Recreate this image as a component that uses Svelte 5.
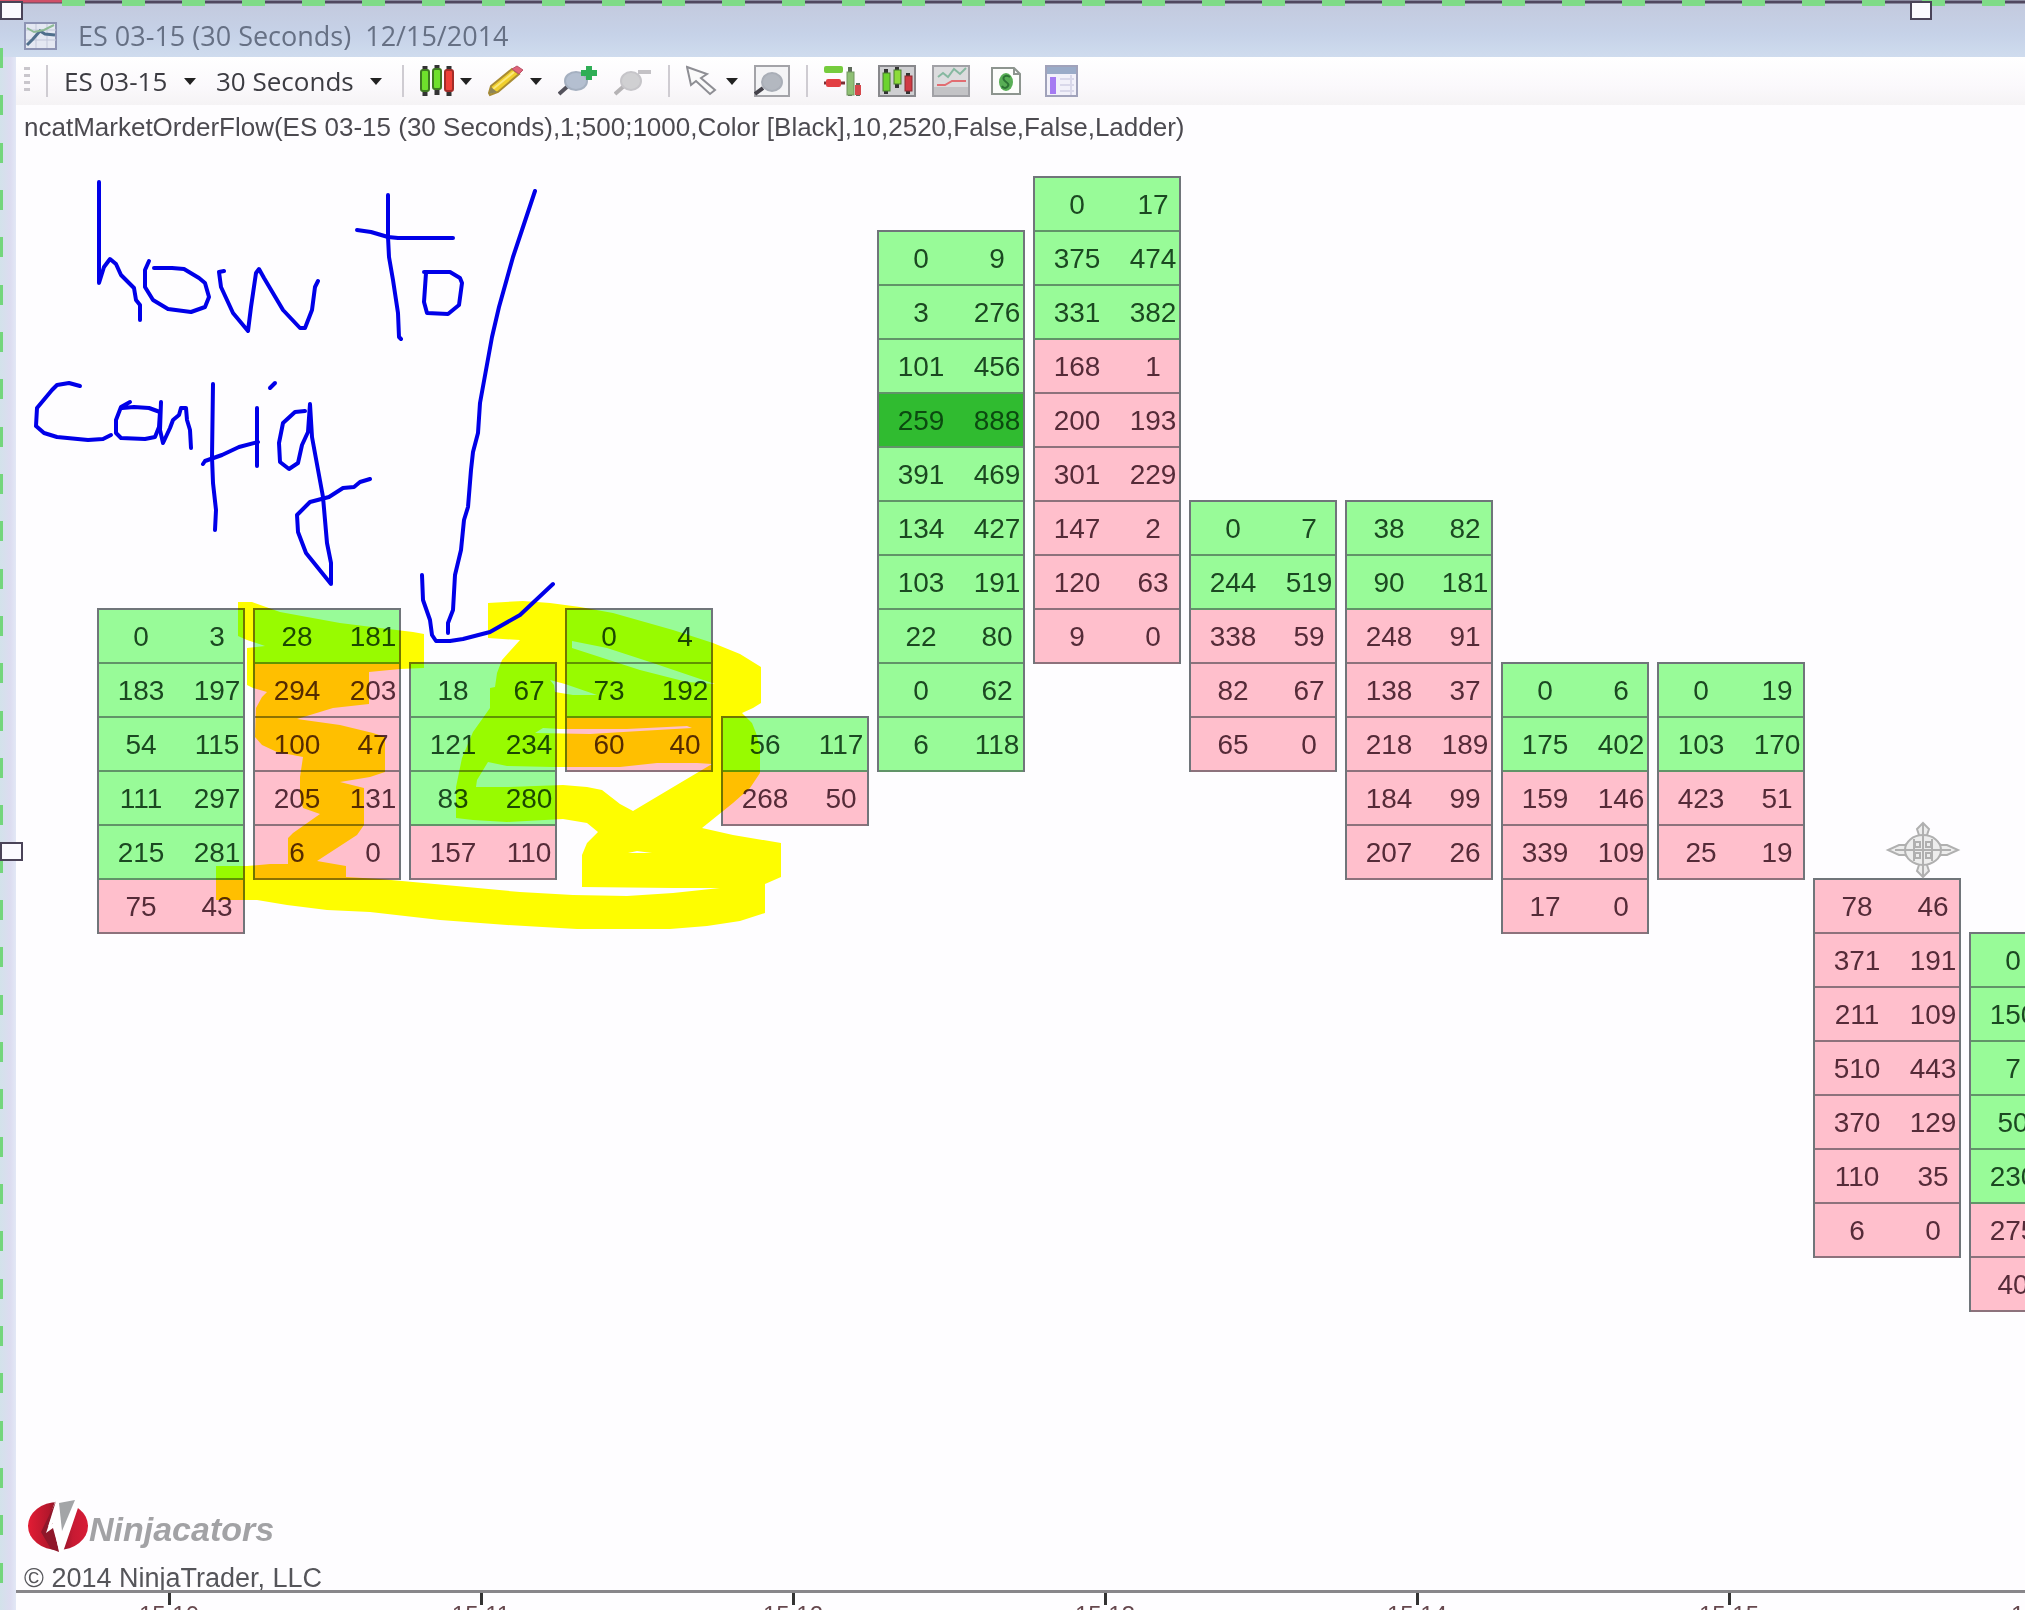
<script lang="ts">
  type Bar = { start: number; up: number; rows: [string, string][]; strong?: number };

  // every bar: "bid ask" per price level, start = level of its top row
  function bar(start: number, up: number, text: string, strong = -1): Bar {
    const rows = text.split(",").map((r) => r.split(" ") as [string, string]);
    return { start, up, rows, strong };
  }

  const bars: Bar[] = [
    bar(8, 5, "0 3,183 197,54 115,111 297,215 281,75 43"),
    bar(8, 1, "28 181,294 203,100 47,205 131,6 0"),
    bar(9, 3, "18 67,121 234,83 280,157 110"),
    bar(8, 2, "0 4,73 192,60 40"),
    bar(10, 1, "56 117,268 50"),
    bar(1, 10, "0 9,3 276,101 456,259 888,391 469,134 427,103 191,22 80,0 62,6 118", 3),
    bar(0, 3, "0 17,375 474,331 382,168 1,200 193,301 229,147 2,120 63,9 0"),
    bar(6, 2, "0 7,244 519,338 59,82 67,65 0"),
    bar(6, 2, "38 82,90 181,248 91,138 37,218 189,184 99,207 26"),
    bar(9, 2, "0 6,175 402,159 146,339 109,17 0"),
    bar(9, 2, "0 19,103 170,423 51,25 19"),
    bar(13, 0, "78 46,371 191,211 109,510 443,370 129,110 35,6 0"),
    bar(14, 5, "0 ,150 ,7 ,50 ,230 ,275 ,40 "),
  ];

  const times = ["15:10", "15:11", "15:12", "15:13", "15:14", "15:15", "15:16"];

  const ink = [
    "99,182 99,283 104,267 110,259 116,264 121,275 134,288 136,300 140,305 140,320",
    "149,261 145,270 145,287 153,300 168,309 191,312 205,307 209,297 205,283 199,278 184,269 172,268 154,268",
    "224,271 219,272 221,287 233,313 248,331 251,307 256,273 259,269 264,278 283,310 300,328 305,328 312,310 315,287 318,281",
    "388,195 388,237 389,257 393,280 398,313 399,337 401,339",
    "357,230 371,232 388,237 398,238 453,238",
    "426,273 424,302 427,313 448,314 459,305 462,283 460,278 450,272 424,272",
    "80,386 69,383 57,385 52,390 37,408 36,426 44,433 57,437 88,440 103,439 111,435",
    "130,402 121,407 116,420 116,433 121,438 145,439 155,437 159,427 160,412 149,408 134,407 122,408",
    "161,402 160,430 163,443 170,428 173,420 179,415 181,408 186,408 187,420 190,430 191,448",
    "213,384 212,457 213,483 216,510 215,530",
    "203,464 205,461 222,455 239,447 258,442",
    "257,408 257,466",
    "275,383 270,388",
    "305,411 295,412 283,423 279,443 280,462 289,469 298,463 302,445 308,432 310,404 312,437 323,497 327,543 331,563 331,584 306,553 298,532 297,515 310,502 329,497 343,488 354,487 360,482 370,479",
    "535,191 522,230 513,257 499,307 492,337 480,403 478,433 473,452 471,470 468,507 464,520 461,550 455,575 453,610 448,623 448,633",
    "422,575 423,600 430,620 432,635 436,641 450,641 463,639 490,632 520,615 553,584",
  ];

  const marker =
    "M238 602L252 602L280 612L340 623L380 628L413 632L424 634V668L400 669L369 672V704L333 708L297 719L340 725L373 733L385 737V772L370 777L340 782L364 788V825L357 835L317 861L346 866V877L380 879L413 882L520 892L573 895L627 896L673 893L720 888H673L582 887V855L587 843L598 832L587 823L563 819L507 822L473 820L456 818V787L462 758L473 732L490 708V688L495 687L497 673L502 660L520 640L488 638V603L523 601L550 603L580 607L613 613L673 630L713 643L740 654L761 667V703L753 708L742 713L752 723L756 733L760 747V773L750 788L733 803L702 828L733 835L781 843V877L765 884V913L740 921L707 926L670 929H577L507 925L440 920L370 912L327 910L287 905L257 900H216V866H247L270 864H288V838L293 833L320 814L303 808L300 797V777L303 757L277 752L262 745L255 737L256 708L262 697L267 692L253 688L247 685V648L265 646L247 640L238 636Z" +
    "M572 641L607 648L653 663L715 684L687 682L640 670L572 648Z" +
    "M550 680L565 684L597 695H573L555 692L554 685Z" +
    "M535 733L543 728L560 729H627L687 726L692 728L640 731L590 734Z" +
    "M488 762L507 766L553 767H620L657 763H697L712 764L680 783L633 811L620 804L602 790L587 787L563 785L507 787H476L477 780Z" +
    "M628 853L637 851L652 853Z";
</script>

{#snippet caret()}
  <svg class="caret" width="12" height="8" viewBox="0 0 12 8"><path d="M0 1H12L6 8Z" fill="#222" /></svg>
{/snippet}

<div class="window">
  <header class="titlebar">
    <svg width="34" height="28" viewBox="0 0 34 28">
      <rect x="1" y="1" width="31" height="26" fill="#e4e8f2" stroke="#8d94b4" stroke-width="2" />
      <path d="M2 8H32M2 18H32M12 2V26M23 2V26" stroke="#c3c8da" />
      <path d="M3 23L9 17L16 9L21 12L31 13" fill="none" stroke="#4f6f8c" stroke-width="3" />
      <path d="M3 6L10 10L20 8L30 3" fill="none" stroke="#8dbb95" stroke-width="2" />
    </svg>
    <h1>ES 03-15 (30 Seconds)&nbsp; 12/15/2014</h1>
  </header>

  <main>
    <div class="toolbar">
      <span class="grip"></span>
      <span class="sep"></span>
      <label class="pick">
        <select aria-label="Instrument"><option>ES 03-15</option></select>
        {@render caret()}
      </label>
      <label class="pick">
        <select aria-label="Interval"><option>30 Seconds</option></select>
        {@render caret()}
      </label>
      <span class="sep"></span>
      <button aria-label="Chart style">
        <svg width="34" height="32" viewBox="0 0 34 32">
          <path d="M5 1V31M17 0V30M29 1V31" stroke="#333" stroke-width="5" />
          <rect x="1" y="5" width="8" height="21" rx="2" fill="#6fe02c" stroke="#3f7a22" stroke-width="2" />
          <rect x="13" y="4" width="8" height="20" rx="2" fill="#6fe02c" stroke="#3f7a22" stroke-width="2" />
          <rect x="25" y="5" width="8" height="21" rx="2" fill="#ee4038" stroke="#a32c28" stroke-width="2" />
        </svg>
        {@render caret()}
      </button>
      <button aria-label="Drawing tools">
        <svg width="36" height="32" viewBox="0 0 36 32">
          <path d="M1 28L3 21L24 4L31 9L10 27L2 30Z" fill="#f0cf2e" stroke="#a98c33" stroke-width="2" />
          <path d="M5 24L26 7" stroke="#fbe97c" stroke-width="2" />
          <path d="M24 4L29 1L35 5L31 9Z" fill="#e0637a" stroke="#b95468" />
          <path d="M1 29L3 22L9 27Z" fill="#8d8458" />
        </svg>
        {@render caret()}
      </button>
      <button aria-label="Zoom in">
        <svg width="40" height="32" viewBox="0 0 40 32">
          <path d="M1 29L10 21" stroke="#54525c" stroke-width="4" />
          <ellipse cx="18" cy="16" rx="11" ry="9" fill="#b4bfd0" stroke="#a5b0c0" stroke-width="2" />
          <path d="M31 1V15M23 8H39" stroke="#2fae56" stroke-width="6" />
        </svg>
      </button>
      <button aria-label="Zoom out">
        <svg width="38" height="32" viewBox="0 0 38 32">
          <path d="M1 29L10 21" stroke="#b5b3b5" stroke-width="4" />
          <ellipse cx="17" cy="16" rx="10" ry="9" fill="#d0d0d2" stroke="#c6c5c9" stroke-width="2" />
          <path d="M24 7H37" stroke="#c4c2c6" stroke-width="4" />
        </svg>
      </button>
      <span class="sep"></span>
      <button aria-label="Cursor">
        <svg width="34" height="32" viewBox="0 0 34 32">
          <path d="M1 2L5 20L10 16L24 29L29 25L15 13L21 9Z" fill="#fafafa" stroke="#8e8e94" stroke-width="2" />
        </svg>
        {@render caret()}
      </button>
      <button aria-label="Zoom to frame">
        <svg width="36" height="32" viewBox="0 0 36 32">
          <rect x="1" y="1" width="34" height="30" fill="#f4f4f6" stroke="#a3a3a8" stroke-width="2" />
          <path d="M1 29L9 23" stroke="#44424a" stroke-width="4" />
          <ellipse cx="18" cy="17" rx="10" ry="9" fill="#b3b8c0" stroke="#a9aeb7" stroke-width="2" />
        </svg>
      </button>
      <span class="sep"></span>
      <button aria-label="Order entry">
        <svg width="38" height="32" viewBox="0 0 38 32">
          <rect x="0" y="1" width="19" height="7" rx="2" fill="#76cc3e" />
          <path d="M0 18H21" stroke="#7c2f34" stroke-width="3" />
          <rect x="2" y="14" width="15" height="8" rx="2" fill="#e23f43" />
          <path d="M26 2V31M34 18V31" stroke="#5d6a5a" stroke-width="4" />
          <rect x="23" y="7" width="7" height="23" fill="#8fc075" stroke="#71975f" />
          <rect x="31" y="20" width="6" height="10" fill="#d5484c" />
        </svg>
      </button>
      <button aria-label="Bars panel">
        <svg width="38" height="32" viewBox="0 0 38 32">
          <rect x="1" y="1" width="36" height="30" fill="#cfcfd2" stroke="#88888c" stroke-width="2" />
          <path d="M8 4V29M19 2V23M30 8V29" stroke="#333" stroke-width="4" />
          <rect x="5" y="8" width="7" height="18" fill="#6cd32e" stroke="#497c30" />
          <rect x="16" y="5" width="7" height="14" fill="#8ddb3a" stroke="#497c30" />
          <rect x="27" y="11" width="7" height="15" fill="#cf3a44" stroke="#8e2b33" />
        </svg>
      </button>
      <button aria-label="Indicators">
        <svg width="38" height="32" viewBox="0 0 38 32">
          <rect x="1" y="1" width="36" height="30" fill="#dcdcde" stroke="#a1a1a6" stroke-width="2" />
          <rect x="2" y="22" width="34" height="8" fill="#c3c3c6" />
          <path d="M6 12L11 8L16 12L22 4L28 9L34 3" fill="none" stroke="#86b8a0" stroke-width="2" />
          <path d="M5 20L13 20L20 16L34 16" fill="none" stroke="#e26d72" stroke-width="2" />
        </svg>
      </button>
      <button aria-label="Account">
        <svg width="38" height="32" viewBox="0 0 38 32">
          <path d="M6 3H28L34 9V29H6Z" fill="#fcfdfb" stroke="#8d958f" stroke-width="2" />
          <path d="M28 3V9H34" fill="none" stroke="#8d958f" stroke-width="2" />
          <ellipse cx="20" cy="17" rx="7" ry="9" fill="#58ae55" />
          <path d="M24 12C20 9 16 12 18 15S24 18 22 21S17 23 16 21" fill="none" stroke="#2c7434" stroke-width="2" />
        </svg>
      </button>
      <button aria-label="Properties">
        <svg width="38" height="32" viewBox="0 0 38 32">
          <rect x="6" y="1" width="31" height="30" fill="#f2f1fa" stroke="#a0a2ba" stroke-width="2" />
          <rect x="7" y="2" width="29" height="7" fill="#9aabc8" />
          <rect x="10" y="12" width="6" height="17" fill="#a57bf2" />
          <path d="M20 14H34M20 20H34M20 26H34M31 10V30" stroke="#d9d8ea" stroke-width="2" />
        </svg>
      </button>
    </div>

    <section class="chart">
      <p class="indicator">ncatMarketOrderFlow(ES 03-15 (30 Seconds),1;500;1000,Color [Black],10,2520,False,False,Ladder)</p>

      <div class="bars">
        {#each bars as b, i}
          <table aria-label="Bar {i + 1}" style:--start={b.start}>
            <tbody>
              {#each b.rows as [bid, ask], r}
                <tr class:up={r < b.up} class:strong={r === b.strong}>
                  <td>{bid}</td>
                  <td>{ask}</td>
                </tr>
              {/each}
            </tbody>
          </table>
        {/each}
      </div>

      <div class="brand">
        <svg width="62" height="54" viewBox="0 0 62 54">
          <defs>
            <linearGradient id="disc">
              <stop offset="0" stop-color="#e31c34" />
              <stop offset="0.35" stop-color="#b3172c" />
              <stop offset="0.5" stop-color="#7d1424" />
              <stop offset="0.75" stop-color="#c71a33" />
              <stop offset="1" stop-color="#d81c36" />
            </linearGradient>
          </defs>
          <ellipse cx="31" cy="28" rx="30" ry="24" fill="url(#disc)" />
          <path d="M29 1L18 31L22 28L31 54H36L54 1L37 4Z" fill="#fff" />
          <path d="M32 5L48 2L35 33Z" fill="#a3a5a7" />
          <path d="M29 3L20 32L26 25L31 49L32 54L24 51L14 34Z" fill="#8f172a" />
          <path d="M29 7L19 35L26 30L32 52L36 52L28 24L23 27Z" fill="#fff" />
        </svg>
        <span>Ninjacators</span>
      </div>
      <p class="copyright">© 2014 NinjaTrader, LLC</p>
    </section>

    <footer class="axis">
      {#each times as t}
        <span>{t}</span>
      {/each}
    </footer>
  </main>

  <svg class="overlay marker"><path d={marker} fill="#ff0" fill-rule="evenodd" /></svg>

  <svg class="overlay">
    <g class="ink">
      {#each ink as points}
        <polyline {points} />
      {/each}
    </g>

    <g fill="#ededed" stroke="#b0b0b0" stroke-width="2" transform="translate(1923 850)">
      <path d="M0 -27L6 -21L4 -15L18 -5L24 -5L35 0L24 5L18 5L4 15L6 21L0 27L-6 21L-4 15L-18 5L-24 5L-35 0L-24 -5L-18 -5L-4 -15L-6 -21Z" />
      <ellipse rx="18" ry="15" />
      <path d="M0 -26V26M-28 0H28M-9 -11V11M9 -11V11" fill="none" />
      <rect x="-8" y="-8" width="5" height="5" />
      <rect x="3" y="-8" width="5" height="5" />
      <rect x="-8" y="3" width="5" height="5" />
      <rect x="3" y="3" width="5" height="5" />
    </g>

    <line x1="0" y1="2" x2="100%" y2="2" stroke="#51485f" stroke-width="3" />
    <line x1="62" y1="3" x2="100%" y2="3" stroke="#7fdb87" stroke-width="6" stroke-dasharray="23 37" />
    <line x1="1" y1="48" x2="1" y2="100%" stroke="#74d67c" stroke-width="4" stroke-dasharray="20 27 20 28 20 27" />
    <path d="M0 1H62" stroke="#d05068" stroke-width="3" />
    <g fill="#fbfaff" stroke="#4a4358" stroke-width="2">
      <rect x="1" y="2" width="21" height="17" />
      <rect x="1911" y="2" width="20" height="17" />
      <rect x="1" y="843" width="21" height="17" />
    </g>
  </svg>
</div>

<style>
  :global(body) {
    margin: 0;
  }
  .window {
    position: relative;
    display: flex;
    flex-direction: column;
    height: 100vh;
    overflow: hidden;
    background: linear-gradient(90deg, #d2e2ea, #dcdcf0 10px, #e3e8f6 16px);
    font-family: "Liberation Sans", Arial, sans-serif;
  }
  .titlebar {
    display: flex;
    flex: none;
    align-items: center;
    gap: 20px;
    height: 43px;
    padding: 14px 24px 0;
    background: linear-gradient(#c3c9dd, #c6d2e8 60%, #cfdcee);
  }
  h1 {
    margin: 0;
    color: #667084;
    font: 27px "Open Sans", "Noto Sans", sans-serif;
    line-height: 36px;
  }
  main {
    display: flex;
    flex: 1;
    flex-direction: column;
    min-height: 0;
    margin-left: 16px;
    background: #fefdff;
  }
  .toolbar {
    display: flex;
    flex: none;
    align-items: center;
    gap: 16px;
    height: 48px;
    padding-left: 8px;
    background: linear-gradient(#fff, #fbf9fc 60%, #f5f3f5);
  }
  .grip {
    width: 6px;
    height: 28px;
    background: repeating-linear-gradient(#c9c6cc 0 3px, transparent 3px 7px);
  }
  .sep {
    width: 2px;
    height: 32px;
    background: #cfccd2;
  }
  .pick,
  button {
    display: flex;
    align-items: center;
    gap: 6px;
  }
  .pick {
    gap: 16px;
    margin-right: 4px;
  }
  select {
    padding: 0;
    border: 0;
    appearance: none;
    background: none;
    color: #3c3c42;
    font: 26px "Open Sans", "Noto Sans", sans-serif;
  }
  button {
    padding: 0;
    border: 0;
    background: none;
  }
  .chart {
    display: flex;
    flex: 1;
    flex-direction: column;
    min-height: 0;
    overflow: hidden;
  }
  p {
    margin: 0;
    white-space: nowrap;
  }
  .indicator {
    padding: 10px 8px 37px;
    color: #4c4a50;
    font-size: 26px;
    line-height: 24px;
  }
  .bars {
    display: flex;
    flex: 1;
    align-items: flex-start;
    gap: 8px;
    min-height: 0;
    padding-left: 81px;
  }
  table {
    flex: none;
    width: 148px;
    margin-top: calc(var(--start) * 54px);
    border: solid #70757a;
    border-width: 2px 2px 0;
    border-spacing: 0;
    table-layout: fixed;
  }
  td {
    box-sizing: border-box;
    height: 54px;
    padding: 2px 0 0;
    border-bottom: 2px solid #8d727c;
    background: #ffbfcc;
    color: #552b38;
    font-size: 28px;
    line-height: 30px;
    text-align: center;
  }
  td:first-child {
    width: 84px;
  }
  td:last-child {
    padding-left: 8px;
  }
  .up td {
    border-color: #619468;
    background: #98fb98;
    color: #1b4821;
  }
  .strong td {
    background: #30bb30;
    color: #0b4a10;
  }
  .brand {
    display: flex;
    align-items: center;
    padding-left: 11px;
    color: #a2a2a5;
    font-size: 34px;
    font-style: italic;
    font-weight: bold;
  }
  .brand span {
    padding-top: 8px;
  }
  .copyright {
    padding: 14px 8px 0;
    color: #55555a;
    font-size: 27px;
    line-height: 24px;
  }
  .axis {
    display: flex;
    flex: none;
    height: 17px;
    overflow: hidden;
    border-top: 3px solid #88868a;
    color: #66484e;
    font-size: 24px;
    line-height: 24px;
  }
  .axis span {
    position: relative;
    flex: none;
    width: 312px;
    padding-top: 10px;
    text-align: center;
  }
  .axis span:first-child {
    margin-left: -3px;
  }
  .axis span::before {
    content: "";
    position: absolute;
    top: 0;
    left: 155px;
    width: 3px;
    height: 12px;
    background: #333;
  }
  .overlay {
    position: absolute;
    inset: 0;
    width: 100%;
    height: 100%;
    pointer-events: none;
  }
  .marker {
    mix-blend-mode: multiply;
  }
  .ink {
    fill: none;
    stroke: #0000e8;
    stroke-width: 4px;
    stroke-linecap: round;
    stroke-linejoin: round;
  }
</style>
